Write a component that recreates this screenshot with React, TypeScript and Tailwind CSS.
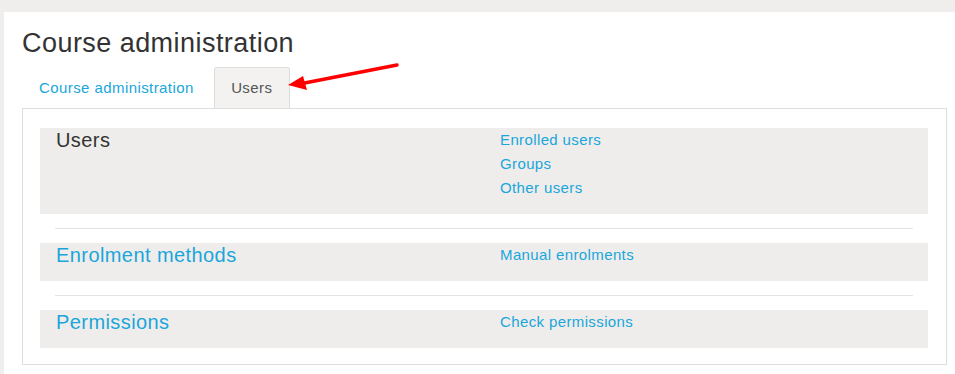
import React from "react";

const rows = [
  { title: "Users", dark: true, links: ["Enrolled users", "Groups", "Other users"] },
  { title: "Enrolment methods", dark: false, links: ["Manual enrolments"] },
  { title: "Permissions", dark: false, links: ["Check permissions"] },
];

export default function App() {
  return (
    <div className="relative min-h-[374px] bg-[#efeeec] pt-[12px] pl-[4px] font-['Liberation_Sans',Arial,sans-serif]">
      <div className="min-h-[362px] bg-white pl-[18px] pr-[8px] pt-[16px] pb-[9px]">
        <h2 className="m-0 text-[27px] leading-[30px] tracking-[0.45px] font-normal text-[#333333]">Course administration</h2>
        <div className="mt-[9px] flex h-[41px]">
          <div className="mr-[3px] border border-transparent px-[16px] pt-[10px] text-[15px] leading-[20px] tracking-[0.42px] text-[#1aa6dc]">
            Course administration
          </div>
          <div className="w-[76px] rounded-t-[3px] border border-b-0 border-[#dddddd] bg-[#f3f2f0] pt-[10px] text-center text-[15px] leading-[20px] tracking-[0.4px] text-[#555555]">
            Users
          </div>
        </div>
        <div className="border border-[#dedede] pt-[19px] pb-[16px] pl-[17px] pr-[18px]">
          {rows.map((r, i) => (
            <div key={r.title}>
              {i > 0 && <div className="mx-[15px] my-[14px] h-px bg-[#e3e3e3]" />}
              <div className="flex bg-[#eeedeb] pb-[14px]">
                <div
                  className={`w-[460px] pl-[16px] pt-[1px] text-[20px] leading-[22px] tracking-[0.42px] ${
                    r.dark ? "text-[#333333]" : "text-[#1aa6dc]"
                  }`}
                >
                  {r.title}
                </div>
                <div className="flex flex-col text-[15px] leading-[24px] tracking-[0.38px] text-[#1aa6dc]">
                  {r.links.map((l) => (
                    <span key={l}>{l}</span>
                  ))}
                </div>
              </div>
            </div>
          ))}
        </div>
      </div>
      <svg className="pointer-events-none absolute left-0 top-0" width="955" height="374" viewBox="0 0 955 374">
        <line x1="397" y1="65" x2="302" y2="83.5" stroke="#ff0000" strokeWidth="3.5" strokeLinecap="round" />
        <polygon points="288,85 303,76 307,90" fill="#ff0000" />
      </svg>
    </div>
  );
}
